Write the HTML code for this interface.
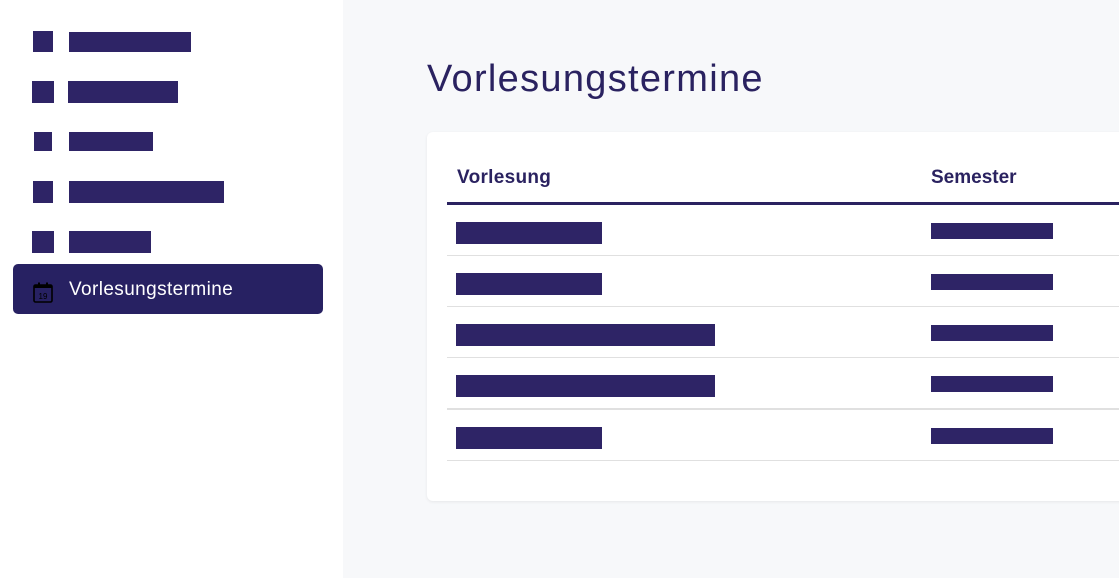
<!DOCTYPE html>
<html><head><style>
body{margin:0;width:1119px;height:578px;overflow:hidden;font-family:"Liberation Sans",sans-serif;background:#fff;position:relative}
.a{position:absolute;background:#2e2466}
#main{position:absolute;left:343px;top:0;width:776px;height:578px;background:#f7f8fa}
#card{position:absolute;left:427px;top:132px;width:720px;height:369px;background:#fff;border-radius:6px;box-shadow:0 1px 3px rgba(0,0,0,.07)}
.t{position:absolute;color:#2a2260}
.sep{position:absolute;left:447px;width:672px;height:1px;background:#e0e0e0}
</style></head><body>
<div class="a" style="left:33px;top:31px;width:20px;height:21px"></div>
<div class="a" style="left:69px;top:32px;width:122px;height:20px"></div>
<div class="a" style="left:32px;top:81px;width:22px;height:22px"></div>
<div class="a" style="left:68px;top:81px;width:110px;height:22px"></div>
<div class="a" style="left:34px;top:132px;width:18px;height:19px"></div>
<div class="a" style="left:69px;top:132px;width:84px;height:19px"></div>
<div class="a" style="left:33px;top:181px;width:20px;height:22px"></div>
<div class="a" style="left:69px;top:181px;width:155px;height:22px"></div>
<div class="a" style="left:32px;top:231px;width:22px;height:22px"></div>
<div class="a" style="left:69px;top:231px;width:82px;height:22px"></div>
<div style="position:absolute;left:13px;top:264px;width:310px;height:50px;background:#272162;border-radius:5px"></div>
<svg style="position:absolute;left:33px;top:282px" width="20" height="21" viewBox="0 0 20 21"><rect x="1" y="3" width="18" height="17" rx="1.5" fill="none" stroke="#000" stroke-width="1.6"/><rect x="1" y="3" width="18" height="3" fill="#000"/><rect x="5" y="0.5" width="2" height="4" fill="#000"/><rect x="13" y="0.5" width="2" height="4" fill="#000"/><text x="10" y="17" font-size="8" text-anchor="middle" fill="#000" font-family="Liberation Sans">19</text></svg>
<div style="position:absolute;left:69px;top:279px;color:#fff;font-size:19px;letter-spacing:0.4px">Vorlesungstermine</div>
<div id="main"></div>
<div class="t" style="left:427px;top:58px;font-size:38px;letter-spacing:1.3px">Vorlesungstermine</div>
<div id="card"></div>
<div class="t" style="left:457px;top:167px;font-size:19px;font-weight:bold;letter-spacing:0.3px">Vorlesung</div>
<div class="t" style="left:931px;top:167px;font-size:19px;font-weight:bold">Semester</div>
<div style="position:absolute;left:447px;top:202px;width:672px;height:3px;background:#2a2260"></div>
<div class="sep" style="top:255px"></div><div class="sep" style="top:306px"></div><div class="sep" style="top:357px"></div><div class="sep" style="top:408px;height:2px"></div><div class="sep" style="top:460px"></div>
<div class="a" style="left:456px;top:222px;width:146px;height:22px"></div>
<div class="a" style="left:456px;top:273px;width:146px;height:22px"></div>
<div class="a" style="left:456px;top:324px;width:259px;height:22px"></div>
<div class="a" style="left:456px;top:375px;width:259px;height:22px"></div>
<div class="a" style="left:456px;top:427px;width:146px;height:22px"></div>
<div class="a" style="left:931px;top:223px;width:122px;height:16px"></div>
<div class="a" style="left:931px;top:274px;width:122px;height:16px"></div>
<div class="a" style="left:931px;top:325px;width:122px;height:16px"></div>
<div class="a" style="left:931px;top:376px;width:122px;height:16px"></div>
<div class="a" style="left:931px;top:428px;width:122px;height:16px"></div>
</body></html>
